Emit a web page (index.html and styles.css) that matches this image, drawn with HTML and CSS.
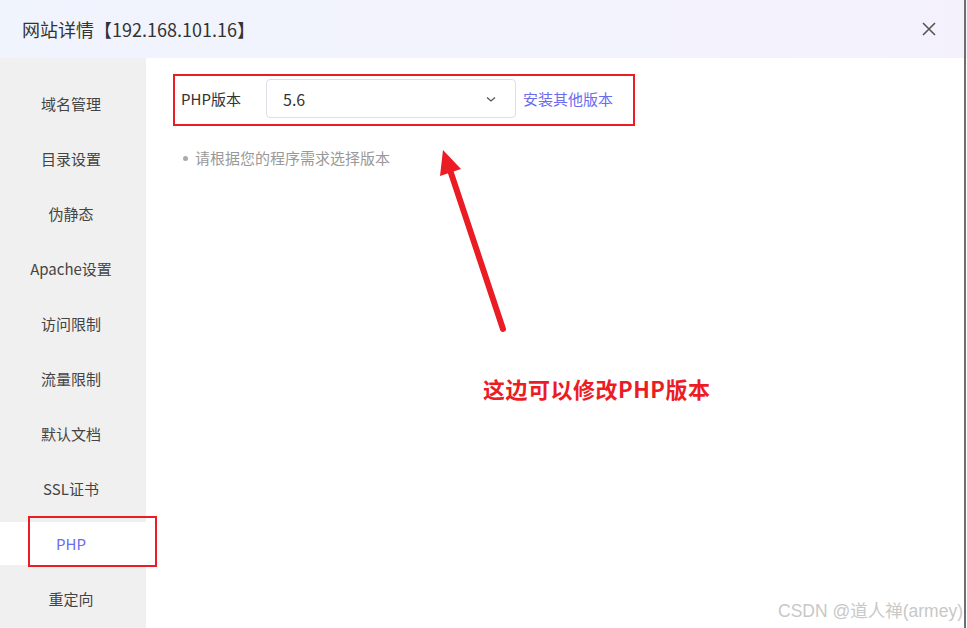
FILE: index.html
```html
<!DOCTYPE html>
<html lang="zh-CN">
<head>
  <meta charset="UTF-8">
  <meta name="viewport" content="width=device-width, initial-scale=1.0">
  <title>网站详情</title>
  <link rel="stylesheet" href="styles.css">
</head>
<body>
  <div class="dialog">
    <div class="header">
      <span class="title">网站详情【192.168.101.16】</span>
      <span class="close">
        <svg width="16" height="16" viewBox="0 0 16 16"><path d="M2 2L14 14M14 2L2 14" stroke="#555" stroke-width="1.6" fill="none"/></svg>
      </span>
    </div>
    <div class="body">
      <ul class="menu">
        <li>域名管理</li>
        <li>目录设置</li>
        <li>伪静态</li>
        <li>Apache设置</li>
        <li>访问限制</li>
        <li>流量限制</li>
        <li>默认文档</li>
        <li>SSL证书</li>
        <li class="active">PHP</li>
        <li>重定向</li>
      </ul>
      <div class="content">
        <div class="row">
          <label class="label">PHP版本</label>
          <div class="select">
            <span>5.6</span>
            <svg width="12" height="12" viewBox="0 0 12 12"><path d="M2 4.5L6 8L10 4.5" stroke="#555" stroke-width="1.3" fill="none"/></svg>
          </div>
          <a class="link">安装其他版本</a>
        </div>
        <ul class="tips">
          <li>请根据您的程序需求选择版本</li>
        </ul>
      </div>
    </div>
    <div class="mark mark-row"></div>
    <div class="mark mark-menu"></div>
    <svg class="arrow" width="967" height="628" viewBox="0 0 967 628">
      <line x1="503" y1="329" x2="450" y2="170" stroke="#ec1c24" stroke-width="6" stroke-linecap="round"/>
      <polygon points="443,150 440,176 461,169" fill="#ec1c24"/>
    </svg>
    <div class="note">这边可以修改PHP版本</div>
    <div class="watermark">CSDN @道人禅(armey)</div>
    <div class="edge"></div>
  </div>
</body>
</html>
```
FILE: styles.css
```css
html, body {
  margin: 0;
  padding: 0;
  background: #fff;
}
body {
  font-family: "Noto Sans CJK SC", "Liberation Sans", sans-serif;
  color: #333;
  width: 967px;
  height: 628px;
  overflow: hidden;
}
* {
  box-sizing: border-box;
}
.dialog {
  position: relative;
  width: 967px;
  height: 628px;
  display: flex;
  flex-direction: column;
}
.header {
  height: 58px;
  flex-shrink: 0;
  display: flex;
  align-items: center;
  justify-content: space-between;
  padding: 0 30px 0 22px;
  background: linear-gradient(90deg, #f0f4fd, #f4f1fc);
}
.title {
  font-size: 18px;
  color: #333;
}
.close {
  display: flex;
}
.body {
  flex: 1;
  display: flex;
}
.menu {
  list-style: none;
  margin: 0;
  padding: 24px 0 0;
  width: 146px;
  background: #f0f0f0;
  display: flex;
  flex-direction: column;
  gap: 12px;
}
.menu li {
  height: 43px;
  line-height: 43px;
  text-align: center;
  padding-right: 4px;
  font-size: 15px;
  color: #444;
}
.menu li.active {
  background: #fff;
  color: #6b6cf0;
}
.content {
  flex: 1;
  padding: 21px 0 0 35px;
}
.row {
  display: flex;
  align-items: center;
  height: 39px;
}
.label {
  width: 85px;
  font-size: 15px;
  color: #333;
}
.select {
  width: 250px;
  height: 39px;
  border: 1px solid #dcdfe6;
  border-radius: 4px;
  display: flex;
  align-items: center;
  justify-content: space-between;
  padding: 0 18px 0 16px;
  font-size: 16px;
  color: #333;
}
.link {
  margin-left: 7px;
  font-size: 15px;
  color: #6b6cf0;
}
.tips {
  margin: 29px 0 0;
  padding: 0 0 0 14px;
  list-style: none;
}
.tips li {
  position: relative;
  font-size: 15px;
  color: #999;
}
.tips li::before {
  content: "";
  position: absolute;
  left: -12px;
  top: 9px;
  width: 5px;
  height: 5px;
  border-radius: 50%;
  background: #aaa;
}
.mark {
  position: absolute;
  border: 2px solid #ec1c24;
}
.mark-row {
  left: 173px;
  top: 74px;
  width: 462px;
  height: 52px;
}
.mark-menu {
  left: 28px;
  top: 516px;
  width: 129px;
  height: 51px;
}
.arrow {
  position: absolute;
  left: 0;
  top: 0;
}
.note {
  position: absolute;
  left: 483px;
  top: 372px;
  font-size: 22px;
  font-weight: bold;
  letter-spacing: 0.5px;
  color: #ec1c24;
}
.watermark {
  position: absolute;
  right: 4px;
  top: 597px;
  font-family: "Liberation Sans", "Noto Sans CJK SC", sans-serif;
  font-size: 17.5px;
  color: #c8c8c8;
}
.edge {
  position: absolute;
  right: 1px;
  top: 0;
  width: 2px;
  height: 628px;
  background: #6e6e6e;
}
```
